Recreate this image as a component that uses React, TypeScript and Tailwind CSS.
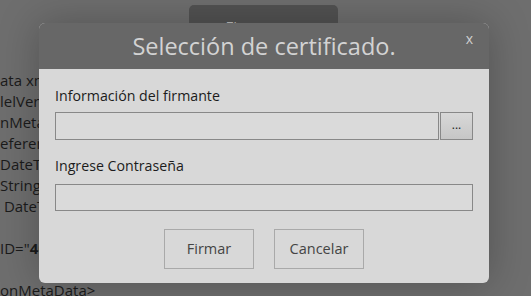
export default function App() {
  const lines = [
    'ata xmlns',
    'lelVersion',
    'nMetaData',
    'eference',
    'DateTime',
    'String t',
    ' DateTime',
    '',
  ];

  return (
    <div className="relative w-[531px] h-[296px] overflow-hidden bg-[#6e6e6e] font-['Open_Sans',sans-serif]">
      {/* page behind the overlay */}
      <div className="absolute left-[189px] top-[5px] w-[149px] h-[40px] rounded-t-[5px] bg-[#525252] flex justify-center pt-[14px]">
        <span className="text-[15px] leading-none text-[#bdbdbd] -ml-[30px]">Firmar</span>
      </div>
      <div className="pt-[70px] text-[15px] leading-[21px] text-[#1b1b1b] whitespace-pre">
        <div className="w-[39px] overflow-hidden">
          {lines.map((l, i) => (
            <div key={i} className="h-[21px]">{l}</div>
          ))}
          <div className="h-[21px]">
            ID="<b>4</b>0b2c"
          </div>
          <div className="h-[21px]"></div>
        </div>
        <div className="h-[21px]">onMetaData&gt;</div>
      </div>

      {/* modal */}
      <div className="absolute left-[39px] top-[23px] w-[450px] h-[260px] rounded-[6px] overflow-hidden bg-[#d8d8d8] shadow-[0_0_40px_rgba(0,0,0,0.25)] flex flex-col">
        <div className="relative h-[46px] bg-[#676767] flex items-center justify-center">
          <h1 className="text-[23.5px] leading-none text-[#d3d3d3] pt-[2px]">Selección de certificado.</h1>
          <span className="absolute right-[16px] top-[5px] text-[14px] text-[#cfcfcf]">x</span>
        </div>
        <div className="flex-1 px-[16px] pt-[17px] text-[#1c1c1c]">
          <div className="text-[14.2px] leading-[20px]">Información del firmante</div>
          <div className="mt-[6px] flex h-[28px]">
            <div className="flex-1 border border-[#888] bg-[#dadada]"></div>
            <button className="w-[33px] ml-[1px] border border-[#888] bg-gradient-to-b from-[#d8d8d8] to-[#c6c6c6] text-[12px] leading-none text-[#222] pb-[2px]">
              ...
            </button>
          </div>
          <div className="mt-[16px] text-[14.2px] leading-[20px]">Ingrese Contraseña</div>
          <div className="mt-[8px] h-[27px] border border-[#888] bg-[#dadada]"></div>
          <div className="mt-[18px] flex justify-center gap-[20px]">
            <button className="w-[90px] h-[40px] border border-[#a9a9a9] text-[14.5px] text-[#444]">Firmar</button>
            <button className="w-[90px] h-[40px] border border-[#a9a9a9] text-[14.5px] text-[#444]">Cancelar</button>
          </div>
        </div>
      </div>
    </div>
  );
}
